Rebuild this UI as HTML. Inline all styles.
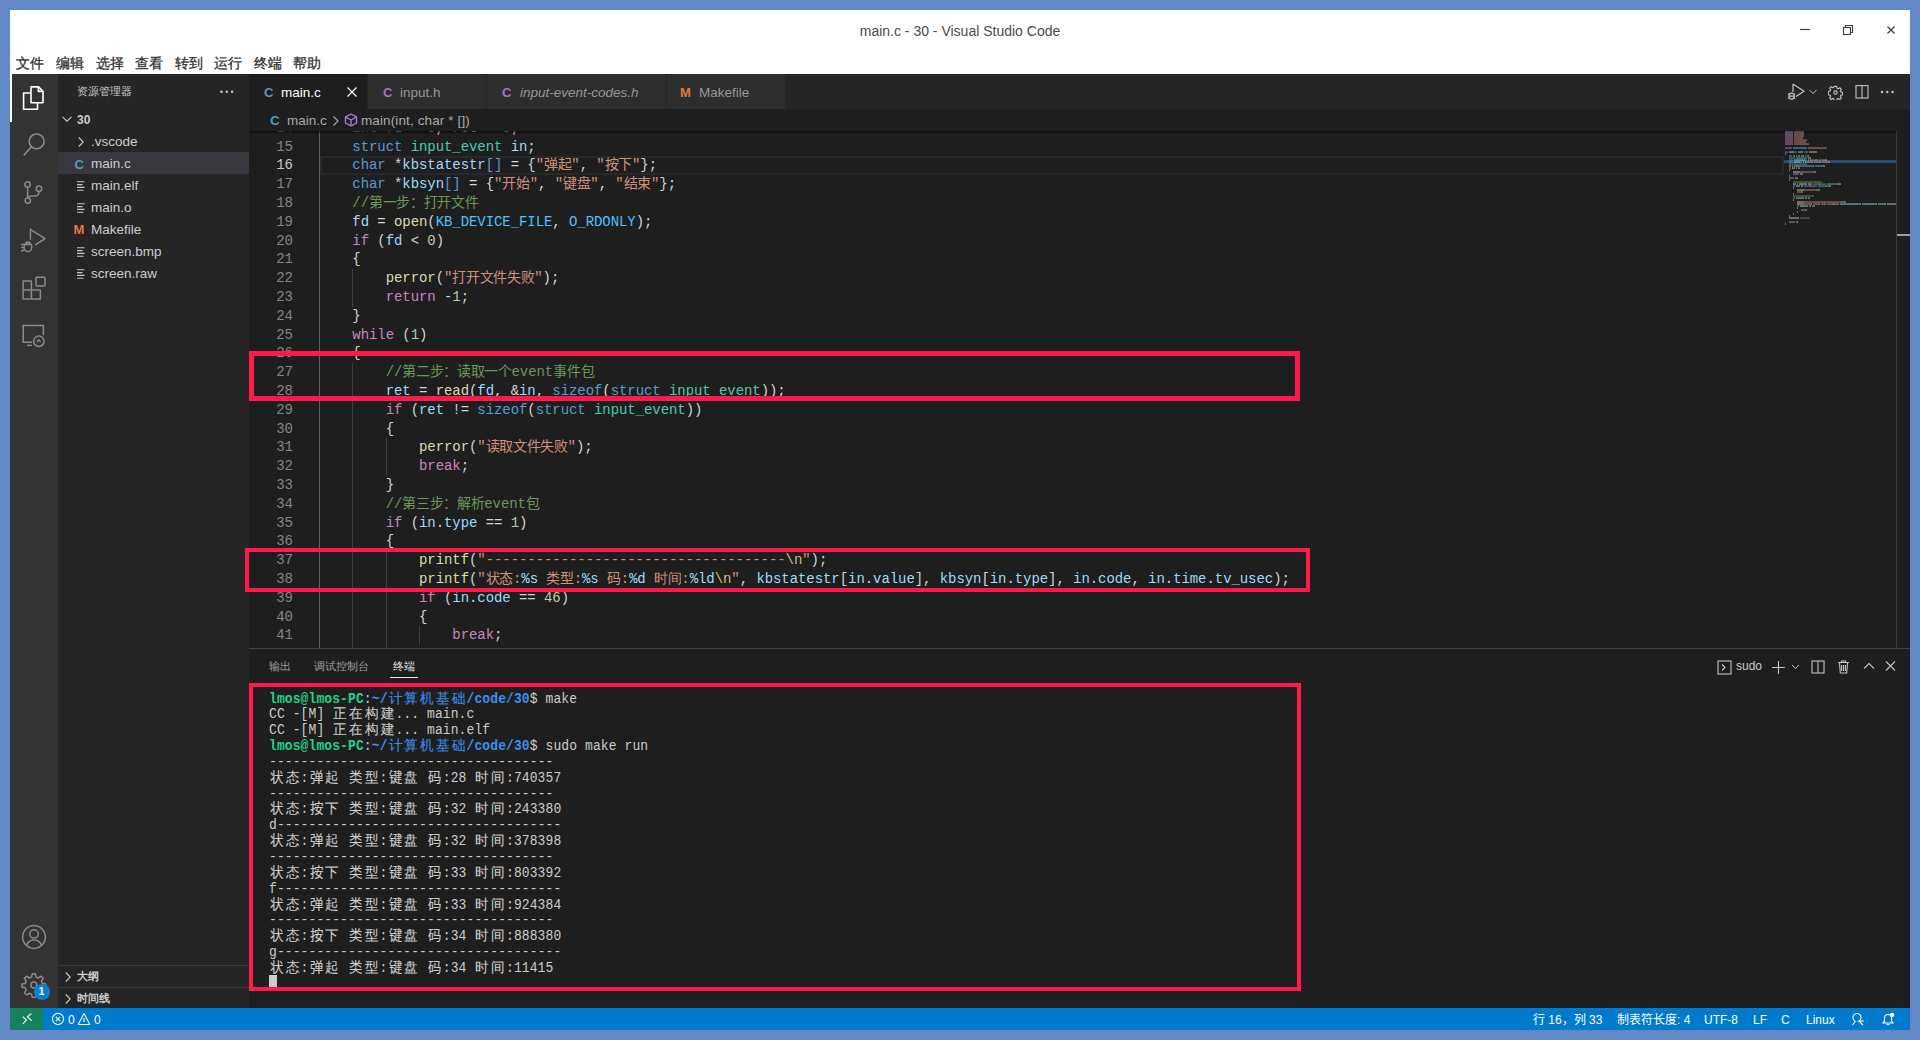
<!DOCTYPE html>
<html><head><meta charset="utf-8">
<style>
*{margin:0;padding:0;box-sizing:border-box}
html,body{width:1920px;height:1040px;overflow:hidden;background:#6388c6;font-family:"Liberation Sans",sans-serif}
.a{position:absolute}
b,i{font-weight:normal;font-style:normal}
#title{left:10px;top:10px;width:1900px;height:64px;background:#fff}
#ttext{left:0;top:13px;width:1900px;text-align:center;font-size:14px;color:#4a4a4a;letter-spacing:0}
.mi{top:44.5px;font-size:14px;color:#333333;-webkit-text-stroke:0.3px #333333}
#act{left:10px;top:74px;width:48px;height:934px;background:#333333}
#side{left:58px;top:74px;width:191px;height:934px;background:#252526}
#main{left:249px;top:74px;width:1661px;height:934px;background:#1e1e1e}
#tabs{left:0;top:0;width:1661px;height:35px;background:#252526}
.tab{top:0;height:35px;background:#2d2d2d;border-right:1px solid #252526;font-size:13.5px;color:#969696}
.tab.act{background:#1e1e1e;color:#ffffff}
.tab span{position:absolute;top:11px;white-space:nowrap}
#bc{left:0;top:35px;width:1661px;height:22px;background:#1e1e1e;font-size:13.5px;color:#a9a9a9}
#ed{left:0;top:57px;width:1661px;height:517px;overflow:hidden;background:#1e1e1e}
.cl{position:absolute;left:70px;height:18.8px;line-height:18.8px;font-family:"Liberation Mono",monospace;font-size:14px;color:#d4d4d4;white-space:pre;letter-spacing:-0.07px}
.cl i.cj{letter-spacing:-0.35px}
.ln{position:absolute;left:0;width:44px;text-align:right;height:18.8px;line-height:18.8px;font-family:"Liberation Mono",monospace;font-size:14px;color:#858585}
.ln.cur{color:#c6c6c6}
.ig{position:absolute;width:1px;background:#404040}
.ig.act{background:#606060}
b.k{color:#569cd6}b.c{color:#c586c0}b.t{color:#4ec9b0}b.v{color:#9cdcfe}b.f{color:#dcdcaa}
b.s{color:#ce9178}b.m{color:#6a9955}b.n{color:#b5cea8}b.o{color:#4fc1ff}b.e{color:#d7ba7d}
#curline{left:71px;top:25.4px;width:1464px;height:18.8px;border:2px solid #282828}
#panel{left:0;top:574px;width:1661px;height:360px;background:#1e1e1e;border-top:1px solid #414141}
.pt{top:9.5px;font-size:11px;color:#a0a0a0}
.tl{position:absolute;left:20px;height:15.84px;line-height:15.84px;font-family:"Liberation Mono",monospace;font-size:13px;color:#cccccc;white-space:pre;letter-spacing:0.1px}
.tl.sc{transform:scaleY(1.13);transform-origin:0 11.38px}
.tl i.tw{display:inline-block;width:15.8px;text-align:center;letter-spacing:0}
.tl.sc i.tw{transform:scale(1.03,0.94);transform-origin:50% 12px}
.tl i.tw{-webkit-text-stroke:0.1px currentColor}
.tl b.pg{color:#23d18b;font-weight:bold}
.tl b.pb{color:#3b8eea;font-weight:bold}
.cursor{display:inline-block;width:7.9px;height:14px;background:#cccccc;vertical-align:top;margin-top:-2px}
#status{left:10px;top:1008px;width:1900px;height:22px;background:#007acc;color:#fff;font-size:12px}
#remote{left:0;top:0;width:33px;height:22px;background:#16825d}
.st{top:4.5px;white-space:nowrap;line-height:14px}
.red{position:absolute;border:5px solid #ff1a4a}
.side-t{font-size:11px;color:#c8c8c8}
.fi{font-size:13.5px;color:#cccccc;white-space:nowrap}
</style></head><body>
<!-- title bar -->
<div id="title" class="a">
  <div id="ttext" class="a">main.c - 30 - Visual Studio Code</div>
  <svg class="a" style="left:1788px;top:14px" width="14" height="14" viewBox="0 0 14 14"><path d="M2 5.5h10" stroke="#3c3c3c" stroke-width="1.2"/></svg>
  <svg class="a" style="left:1831px;top:13px" width="14" height="14" viewBox="0 0 14 14" fill="none" stroke="#3c3c3c" stroke-width="1.1"><rect x="2.5" y="4.5" width="7" height="7"/><path d="M4.5 4.5V2.5h7v7h-2"/></svg>
  <svg class="a" style="left:1874px;top:13px" width="14" height="14" viewBox="0 0 14 14" fill="none" stroke="#3c3c3c" stroke-width="1.2"><path d="M3.5 3.5l7 7M10.5 3.5l-7 7"/></svg>
  <div class="a mi" style="left:6px">文件</div>
  <div class="a mi" style="left:45.5px">编辑</div>
  <div class="a mi" style="left:85.5px">选择</div>
  <div class="a mi" style="left:124.5px">查看</div>
  <div class="a mi" style="left:164.5px">转到</div>
  <div class="a mi" style="left:204px">运行</div>
  <div class="a mi" style="left:243.5px">终端</div>
  <div class="a mi" style="left:283px">帮助</div>
</div>

<!-- activity bar -->
<div id="act" class="a">
  <div class="a" style="left:0;top:0;width:2px;height:48px;background:#fff"></div>
  <!-- explorer -->
  <svg class="a" style="left:12px;top:11px" width="24" height="27" viewBox="0 0 24 27" fill="none" stroke="#ffffff" stroke-width="1.6" stroke-linejoin="round">
    <path d="M9 1.9h7.6l4.4 4.4V17.8H9z"/><path d="M16.4 1.9V6.4H21"/><path d="M9 8H1.6V24.3H15.5V17.8"/>
  </svg>
  <!-- search -->
  <svg class="a" style="left:12px;top:58px" width="24" height="26" viewBox="0 0 24 26" fill="none" stroke="#8a8a8a" stroke-width="1.6">
    <circle cx="14.6" cy="9.4" r="7.4"/><path d="M9.4 14.8L1.8 23.4"/>
  </svg>
  <!-- scm -->
  <svg class="a" style="left:12px;top:106px" width="24" height="26" viewBox="0 0 24 26" fill="none" stroke="#8a8a8a" stroke-width="1.5">
    <circle cx="5.5" cy="4.5" r="2.7"/><circle cx="5.8" cy="20.6" r="2.7"/><circle cx="17" cy="8.8" r="2.7"/>
    <path d="M5.6 7.2v10.7"/><path d="M17 11.5c0 3-2 4.6-4.6 4.6H10c-2.4 0-4.2 1.2-4.2 1.8"/>
  </svg>
  <!-- debug -->
  <svg class="a" style="left:11px;top:153px" width="26" height="28" viewBox="0 0 26 28" fill="none" stroke="#8a8a8a" stroke-width="1.5" stroke-linejoin="round" stroke-linecap="round">
    <path d="M9.4 2.3V12.3M9.4 2.3L24.1 11.6L14.7 17.5"/>
    <ellipse cx="6.9" cy="20.2" rx="3.8" ry="4.4"/><path d="M3.2 17.4h7.4M5 16a2 1.5 0 0 1 3.8 0"/><path d="M0.4 17.4h2.4M0.4 20.6h2.4M0.6 24l2.4-1"/>
  </svg>
  <!-- extensions -->
  <svg class="a" style="left:11px;top:202px" width="26" height="26" viewBox="0 0 26 26" fill="none" stroke="#8a8a8a" stroke-width="1.5" stroke-linejoin="round">
    <path d="M2.1 5.1H10.4V14.1H19.4V23H2.1Z"/><path d="M2.1 14.1H10.4V23"/><rect x="15" y="1.3" width="9" height="8.6" rx="0.8"/>
  </svg>
  <!-- remote explorer -->
  <svg class="a" style="left:12px;top:250px" width="24" height="24" viewBox="0 0 24 24" fill="none" stroke="#8a8a8a" stroke-width="1.5">
    <path d="M10 18.2H1.2V1.6h20.2v9.6"/><path d="M5 21.4h5"/><circle cx="16.8" cy="17.2" r="5.2"/><path d="M15 17.8l1.8-1.8 1.8 1.8"/>
  </svg>
  <!-- accounts -->
  <svg class="a" style="left:11px;top:850px" width="26" height="26" viewBox="0 0 26 26" fill="none" stroke="#8a8a8a" stroke-width="1.5">
    <circle cx="13" cy="13" r="11.4"/><circle cx="13" cy="10" r="4.2"/><path d="M5.4 21.2c1.6-3.4 4.4-5.2 7.6-5.2s6 1.8 7.6 5.2"/>
  </svg>
  <!-- settings gear -->
  <svg class="a" style="left:11px;top:898px" width="26" height="26" viewBox="0 0 26 26" fill="none" stroke="#8a8a8a" stroke-width="1.5" stroke-linejoin="round">
    <path d="M11.2 1.8h3.2l.6 3.2 2.2 1 2.8-1.8 2.2 2.2-1.8 2.8 1 2.2 3.2.6v3.2l-3.2.6-1 2.2 1.8 2.8-2.2 2.2-2.8-1.8-2.2 1-.6 3.2h-3.2l-.6-3.2-2.2-1-2.8 1.8-2.2-2.2 1.8-2.8-1-2.2-3.2-.6v-3.2l3.2-.6 1-2.2-1.8-2.8 2.2-2.2 2.8 1.8 2.2-1z"/>
    <circle cx="12.8" cy="13" r="3"/>
  </svg>
  <div class="a" style="left:23.5px;top:909.5px;width:16px;height:16px;border-radius:50%;background:#0b7fd3;color:#fff;font-size:10px;font-weight:bold;text-align:center;line-height:16px">1</div>
</div>

<!-- sidebar -->
<div id="side" class="a">
  <div class="a side-t" style="left:19px;top:10px">资源管理器</div>
  <div class="a" style="left:161px;top:16px;width:16px;height:3px">
    <svg width="16" height="4" viewBox="0 0 16 4" class="a" style="left:0;top:0"><circle cx="2.5" cy="1.8" r="1.3" fill="#c5c5c5"/><circle cx="7.8" cy="1.8" r="1.3" fill="#c5c5c5"/><circle cx="13.1" cy="1.8" r="1.3" fill="#c5c5c5"/></svg>
  </div>
  <!-- root 30 -->
  <svg class="a" style="left:3px;top:39px" width="12" height="12" viewBox="0 0 12 12" fill="none" stroke="#c5c5c5" stroke-width="1.1"><path d="M1.5 3.8L6 8.2l4.5-4.4"/></svg>
  <div class="a" style="left:19px;top:38.5px;font-size:12px;font-weight:bold;color:#cccccc">30</div>
  <svg class="a" style="left:17px;top:62px" width="12" height="12" viewBox="0 0 12 12" fill="none" stroke="#c5c5c5" stroke-width="1.1"><path d="M3.8 1.5L8.2 6l-4.4 4.5"/></svg>
  <div class="a fi" style="left:33px;top:60px">.vscode</div>
  <div class="a" style="left:0;top:78px;width:191px;height:22px;background:#37373d"></div>
  <div class="a" style="left:16.5px;top:82.5px;font-size:13px;font-weight:bold;color:#519aba">C</div>
  <div class="a fi" style="left:33px;top:82px">main.c</div>
  <svg class="a" style="left:18px;top:105.5px" width="12" height="12" viewBox="0 0 12 12" stroke="#c5c5c5" stroke-width="1.1"><path d="M1 1.8h7.5M1 4.6h5.5M1 7.4h7.5M1 10.2h6.5"/></svg>
  <div class="a fi" style="left:33px;top:104px">main.elf</div>
  <svg class="a" style="left:18px;top:127.5px" width="12" height="12" viewBox="0 0 12 12" stroke="#c5c5c5" stroke-width="1.1"><path d="M1 1.8h7.5M1 4.6h5.5M1 7.4h7.5M1 10.2h6.5"/></svg>
  <div class="a fi" style="left:33px;top:126px">main.o</div>
  <div class="a" style="left:15.5px;top:148px;font-size:13px;font-weight:bold;color:#e37933">M</div>
  <div class="a fi" style="left:33px;top:148px">Makefile</div>
  <svg class="a" style="left:18px;top:171.5px" width="12" height="12" viewBox="0 0 12 12" stroke="#c5c5c5" stroke-width="1.1"><path d="M1 1.8h7.5M1 4.6h5.5M1 7.4h7.5M1 10.2h6.5"/></svg>
  <div class="a fi" style="left:33px;top:170px">screen.bmp</div>
  <svg class="a" style="left:18px;top:193.5px" width="12" height="12" viewBox="0 0 12 12" stroke="#c5c5c5" stroke-width="1.1"><path d="M1 1.8h7.5M1 4.6h5.5M1 7.4h7.5M1 10.2h6.5"/></svg>
  <div class="a fi" style="left:33px;top:192px">screen.raw</div>
  <!-- outline/timeline -->
  <div class="a" style="left:0;top:891px;width:191px;height:1px;background:#3c3c3c"></div>
  <svg class="a" style="left:4px;top:897px" width="12" height="12" viewBox="0 0 12 12" fill="none" stroke="#c5c5c5" stroke-width="1.1"><path d="M3.8 1.5L8.2 6l-4.4 4.5"/></svg>
  <div class="a" style="left:19px;top:895px;font-size:11px;font-weight:bold;color:#cccccc">大纲</div>
  <div class="a" style="left:0;top:913px;width:191px;height:1px;background:#3c3c3c"></div>
  <svg class="a" style="left:4px;top:919px" width="12" height="12" viewBox="0 0 12 12" fill="none" stroke="#c5c5c5" stroke-width="1.1"><path d="M3.8 1.5L8.2 6l-4.4 4.5"/></svg>
  <div class="a" style="left:19px;top:917px;font-size:11px;font-weight:bold;color:#cccccc">时间线</div>
</div>

<!-- main editor group -->
<div id="main" class="a">
  <div id="tabs" class="a">
    <div class="a tab act" style="left:0;width:119px">
      <span style="left:15px;top:10.5px;font-weight:bold;color:#519aba;font-size:13px">C</span>
      <span style="left:32px">main.c</span>
      <svg class="a" style="left:97px;top:13px" width="12" height="10" viewBox="0 0 12 10" fill="none" stroke="#fff" stroke-width="1.2"><path d="M1.5 0.5l9 9M10.5 0.5l-9 9"/></svg>
    </div>
    <div class="a tab" style="left:119px;width:119px">
      <span style="left:15px;top:10.5px;font-weight:bold;color:#a074c4;font-size:13px">C</span>
      <span style="left:32px">input.h</span>
    </div>
    <div class="a tab" style="left:238px;width:180px">
      <span style="left:15px;top:10.5px;font-weight:bold;color:#a074c4;font-size:13px">C</span>
      <span style="left:33px;font-style:italic">input-event-codes.h</span>
    </div>
    <div class="a tab" style="left:418px;width:119px">
      <span style="left:13px;top:10.5px;font-weight:bold;color:#e37933;font-size:13px">M</span>
      <span style="left:32px">Makefile</span>
    </div>
    <!-- actions -->
    <svg class="a" style="left:1538px;top:9px" width="20" height="18" viewBox="0 0 20 18" fill="none" stroke="#c5c5c5" stroke-width="1.2" stroke-linejoin="round">
      <path d="M6 1v8M6 1l11 7.2-8 5.2"/><ellipse cx="4.6" cy="13.2" rx="2.6" ry="3"/><path d="M2 13.2h5.2M1 10.8l1.4.8M8.2 10.8l-1.4.8M1 15.6l1.4-.8M8.2 15.6l-1.4-.8"/>
    </svg>
    <svg class="a" style="left:1559px;top:14px" width="10" height="8" viewBox="0 0 10 8" fill="none" stroke="#c5c5c5" stroke-width="1"><path d="M1.5 2l3.5 3.5L8.5 2"/></svg>
    <svg class="a" style="left:1579px;top:11px" width="15" height="15" viewBox="0 0 16 16" fill="none" stroke="#c5c5c5" stroke-width="1.2" stroke-linejoin="round">
      <path d="M6.8 1.5h2.4l.4 1.9 1.3.6 1.7-1.1 1.7 1.7-1.1 1.7.6 1.3 1.9.4v2.4l-1.9.4-.6 1.3 1.1 1.7-1.7 1.7-1.7-1.1-1.3.6-.4 1.9H6.8l-.4-1.9-1.3-.6-1.7 1.1-1.7-1.7 1.1-1.7-.6-1.3-1.9-.4V6.8l1.9-.4.6-1.3-1.1-1.7 1.7-1.7 1.7 1.1 1.3-.6z"/><circle cx="8" cy="8" r="1.8"/>
    </svg>
    <svg class="a" style="left:1606px;top:11px" width="15" height="15" viewBox="0 0 15 15" fill="none" stroke="#c5c5c5" stroke-width="1.1"><rect x="1" y="0.6" width="12" height="12.4"/><path d="M7 0.6v12.4"/></svg>
    <svg class="a" style="left:1631px;top:16px" width="15" height="4" viewBox="0 0 15 4"><circle cx="2" cy="2" r="1.2" fill="#c5c5c5"/><circle cx="7.3" cy="2" r="1.2" fill="#c5c5c5"/><circle cx="12.6" cy="2" r="1.2" fill="#c5c5c5"/></svg>
  </div>
  <div id="bc" class="a">
    <span class="a" style="left:21px;top:3.5px;font-weight:bold;color:#519aba;font-size:13.5px">C</span>
    <span class="a" style="left:38px;top:3.5px">main.c</span>
    <svg class="a" style="left:82px;top:6px" width="10" height="12" viewBox="0 0 10 12" fill="none" stroke="#a9a9a9" stroke-width="1.1"><path d="M2.5 1.5L7 6l-4.5 4.5"/></svg>
    <svg class="a" style="left:95px;top:4px" width="14" height="14" viewBox="0 0 14 14" fill="none" stroke="#b180d7" stroke-width="1.3" stroke-linejoin="round"><path d="M7 1l5.5 3v6L7 13 1.5 10V4z"/><path d="M1.5 4L7 7l5.5-3M7 7v6"/></svg>
    <span class="a" style="left:112px;top:3.5px;white-space:nowrap;letter-spacing:0.12px">main(int, char * [])</span>
  </div>
  <div id="ed" class="a" lang="zh-CN">
    <div id="curline" class="a"></div>
<div class="ig act" style="left:70.00px;top:-12.20px;height:545.20px"></div>
<div class="ig" style="left:103.48px;top:138.20px;height:37.60px"></div>
<div class="ig" style="left:103.48px;top:232.20px;height:300.80px"></div>
<div class="ig" style="left:136.96px;top:307.40px;height:37.60px"></div>
<div class="ig" style="left:136.96px;top:420.20px;height:112.80px"></div>
<div class="ig" style="left:170.44px;top:495.40px;height:18.80px"></div>
<div class="ln" style="top:-12.20px">14</div>
<div class="ln" style="top:6.60px">15</div>
<div class="ln cur" style="top:25.40px">16</div>
<div class="ln" style="top:44.20px">17</div>
<div class="ln" style="top:63.00px">18</div>
<div class="ln" style="top:81.80px">19</div>
<div class="ln" style="top:100.60px">20</div>
<div class="ln" style="top:119.40px">21</div>
<div class="ln" style="top:138.20px">22</div>
<div class="ln" style="top:157.00px">23</div>
<div class="ln" style="top:175.80px">24</div>
<div class="ln" style="top:194.60px">25</div>
<div class="ln" style="top:213.40px">26</div>
<div class="ln" style="top:232.20px">27</div>
<div class="ln" style="top:251.00px">28</div>
<div class="ln" style="top:269.80px">29</div>
<div class="ln" style="top:288.60px">30</div>
<div class="ln" style="top:307.40px">31</div>
<div class="ln" style="top:326.20px">32</div>
<div class="ln" style="top:345.00px">33</div>
<div class="ln" style="top:363.80px">34</div>
<div class="ln" style="top:382.60px">35</div>
<div class="ln" style="top:401.40px">36</div>
<div class="ln" style="top:420.20px">37</div>
<div class="ln" style="top:439.00px">38</div>
<div class="ln" style="top:457.80px">39</div>
<div class="ln" style="top:476.60px">40</div>
<div class="ln" style="top:495.40px">41</div>
<div class="cl" style="top:-12.20px">    <b class="k">int</b> <b class="v">fd</b> = <b class="n">0</b>, <b class="v">ret</b> = <b class="n">0</b>;</div>
<div class="cl" style="top:6.60px">    <b class="k">struct</b> <b class="t">input_event</b> <b class="v">in</b>;</div>
<div class="cl" style="top:25.40px">    <b class="k">char</b> *<b class="v">kbstatestr</b><b class="k">[]</b> = {<b class="s">&quot;<i class="cj">弹起</i>&quot;</b>, <b class="s">&quot;<i class="cj">按下</i>&quot;</b>};</div>
<div class="cl" style="top:44.20px">    <b class="k">char</b> *<b class="v">kbsyn</b><b class="k">[]</b> = {<b class="s">&quot;<i class="cj">开始</i>&quot;</b>, <b class="s">&quot;<i class="cj">键盘</i>&quot;</b>, <b class="s">&quot;<i class="cj">结束</i>&quot;</b>};</div>
<div class="cl" style="top:63.00px">    <b class="m">//<i class="cj">第一步：打开文件</i></b></div>
<div class="cl" style="top:81.80px">    <b class="v">fd</b> = <b class="f">open</b>(<b class="o">KB_DEVICE_FILE</b>, <b class="o">O_RDONLY</b>);</div>
<div class="cl" style="top:100.60px">    <b class="c">if</b> (<b class="v">fd</b> &lt; <b class="n">0</b>)</div>
<div class="cl" style="top:119.40px">    {</div>
<div class="cl" style="top:138.20px">        <b class="f">perror</b>(<b class="s">&quot;<i class="cj">打开文件失败</i>&quot;</b>);</div>
<div class="cl" style="top:157.00px">        <b class="c">return</b> -<b class="n">1</b>;</div>
<div class="cl" style="top:175.80px">    }</div>
<div class="cl" style="top:194.60px">    <b class="c">while</b> (<b class="n">1</b>)</div>
<div class="cl" style="top:213.40px">    {</div>
<div class="cl" style="top:232.20px">        <b class="m">//<i class="cj">第二步：读取一个</i>event<i class="cj">事件包</i></b></div>
<div class="cl" style="top:251.00px">        <b class="v">ret</b> = <b class="f">read</b>(<b class="v">fd</b>, &amp;<b class="v">in</b>, <b class="k">sizeof</b>(<b class="k">struct</b> <b class="t">input_event</b>));</div>
<div class="cl" style="top:269.80px">        <b class="c">if</b> (<b class="v">ret</b> != <b class="k">sizeof</b>(<b class="k">struct</b> <b class="t">input_event</b>))</div>
<div class="cl" style="top:288.60px">        {</div>
<div class="cl" style="top:307.40px">            <b class="f">perror</b>(<b class="s">&quot;<i class="cj">读取文件失败</i>&quot;</b>);</div>
<div class="cl" style="top:326.20px">            <b class="c">break</b>;</div>
<div class="cl" style="top:345.00px">        }</div>
<div class="cl" style="top:363.80px">        <b class="m">//<i class="cj">第三步：解析</i>event<i class="cj">包</i></b></div>
<div class="cl" style="top:382.60px">        <b class="c">if</b> (<b class="v">in</b>.<b class="v">type</b> == <b class="n">1</b>)</div>
<div class="cl" style="top:401.40px">        {</div>
<div class="cl" style="top:420.20px">            <b class="f">printf</b>(<b class="s">&quot;------------------------------------</b><b class="e">\n</b><b class="s">&quot;</b>);</div>
<div class="cl" style="top:439.00px">            <b class="f">printf</b>(<b class="s">&quot;<i class="cj">状态</i>:</b><b class="v">%s</b><b class="s"> <i class="cj">类型</i>:</b><b class="v">%s</b><b class="s"> <i class="cj">码</i>:</b><b class="v">%d</b><b class="s"> <i class="cj">时间</i>:</b><b class="v">%ld</b><b class="e">\n</b><b class="s">&quot;</b>, <b class="v">kbstatestr</b>[<b class="v">in</b>.<b class="v">value</b>], <b class="v">kbsyn</b>[<b class="v">in</b>.<b class="v">type</b>], <b class="v">in</b>.<b class="v">code</b>, <b class="v">in</b>.<b class="v">time</b>.<b class="v">tv_usec</b>);</div>
<div class="cl" style="top:457.80px">            <b class="c">if</b> (<b class="v">in</b>.<b class="v">code</b> == <b class="n">46</b>)</div>
<div class="cl" style="top:476.60px">            {</div>
<div class="cl" style="top:495.40px">                <b class="c">break</b>;</div>
    <div class="a" style="left:0;top:0;width:1647px;height:3px;background:linear-gradient(#000000aa,#00000000)"></div>
    <!-- minimap -->
    <div class="a" style="left:1535px;top:28.5px;width:112px;height:3px;background:#264f78"></div>
    <div class="a" style="left:0;top:0;opacity:0.5"><svg class="a" style="left:1535.5px;top:-2px" width="112" height="100" viewBox="0 0 112 100"><rect x="0" y="0.2" width="8" height="1.7" fill="#c586c0"/><rect x="9" y="0.2" width="9" height="1.7" fill="#ce9178"/><rect x="0" y="2.2" width="8" height="1.7" fill="#c586c0"/><rect x="9" y="2.2" width="10" height="1.7" fill="#ce9178"/><rect x="0" y="4.2" width="8" height="1.7" fill="#c586c0"/><rect x="9" y="4.2" width="10" height="1.7" fill="#ce9178"/><rect x="0" y="6.2" width="8" height="1.7" fill="#c586c0"/><rect x="9" y="6.2" width="10" height="1.7" fill="#ce9178"/><rect x="0" y="8.2" width="8" height="1.7" fill="#c586c0"/><rect x="9" y="8.2" width="9" height="1.7" fill="#ce9178"/><rect x="0" y="10.2" width="8" height="1.7" fill="#c586c0"/><rect x="9" y="10.2" width="13" height="1.7" fill="#ce9178"/><rect x="0" y="12.2" width="8" height="1.7" fill="#c586c0"/><rect x="9" y="12.2" width="12" height="1.7" fill="#ce9178"/><rect x="0" y="14.2" width="8" height="1.7" fill="#c586c0"/><rect x="9" y="14.2" width="15" height="1.7" fill="#ce9178"/><rect x="0" y="18.2" width="7" height="1.7" fill="#c586c0"/><rect x="8" y="18.2" width="14" height="1.7" fill="#4fc1ff"/><rect x="23" y="18.2" width="19" height="1.7" fill="#ce9178"/><rect x="0" y="22.2" width="3" height="1.7" fill="#569cd6"/><rect x="4" y="22.2" width="4" height="1.7" fill="#dcdcaa"/><rect x="8" y="22.2" width="1" height="1.7" fill="#d4d4d4"/><rect x="9" y="22.2" width="3" height="1.7" fill="#569cd6"/><rect x="13" y="22.2" width="4" height="1.7" fill="#9cdcfe"/><rect x="17" y="22.2" width="1" height="1.7" fill="#d4d4d4"/><rect x="19" y="22.2" width="4" height="1.7" fill="#569cd6"/><rect x="24" y="22.2" width="1" height="1.7" fill="#d4d4d4"/><rect x="25" y="22.2" width="4" height="1.7" fill="#9cdcfe"/><rect x="29" y="22.2" width="3" height="1.7" fill="#d4d4d4"/><rect x="0" y="24.2" width="1" height="1.7" fill="#d4d4d4"/><rect x="4" y="26.2" width="3" height="1.7" fill="#569cd6"/><rect x="8" y="26.2" width="2" height="1.7" fill="#9cdcfe"/><rect x="11" y="26.2" width="1" height="1.7" fill="#d4d4d4"/><rect x="13" y="26.2" width="1" height="1.7" fill="#b5cea8"/><rect x="14" y="26.2" width="1" height="1.7" fill="#d4d4d4"/><rect x="16" y="26.2" width="3" height="1.7" fill="#9cdcfe"/><rect x="20" y="26.2" width="1" height="1.7" fill="#d4d4d4"/><rect x="22" y="26.2" width="1" height="1.7" fill="#b5cea8"/><rect x="23" y="26.2" width="1" height="1.7" fill="#d4d4d4"/><rect x="4" y="28.2" width="6" height="1.7" fill="#569cd6"/><rect x="11" y="28.2" width="11" height="1.7" fill="#4ec9b0"/><rect x="23" y="28.2" width="2" height="1.7" fill="#9cdcfe"/><rect x="25" y="28.2" width="1" height="1.7" fill="#d4d4d4"/><rect x="4" y="30.2" width="4" height="1.7" fill="#569cd6"/><rect x="9" y="30.2" width="1" height="1.7" fill="#d4d4d4"/><rect x="10" y="30.2" width="10" height="1.7" fill="#9cdcfe"/><rect x="20" y="30.2" width="2" height="1.7" fill="#569cd6"/><rect x="23" y="30.2" width="1" height="1.7" fill="#d4d4d4"/><rect x="25" y="30.2" width="1" height="1.7" fill="#d4d4d4"/><rect x="26" y="30.2" width="6" height="1.7" fill="#ce9178"/><rect x="32" y="30.2" width="1" height="1.7" fill="#d4d4d4"/><rect x="34" y="30.2" width="6" height="1.7" fill="#ce9178"/><rect x="40" y="30.2" width="2" height="1.7" fill="#d4d4d4"/><rect x="4" y="32.2" width="4" height="1.7" fill="#569cd6"/><rect x="9" y="32.2" width="1" height="1.7" fill="#d4d4d4"/><rect x="10" y="32.2" width="5" height="1.7" fill="#9cdcfe"/><rect x="15" y="32.2" width="2" height="1.7" fill="#569cd6"/><rect x="18" y="32.2" width="1" height="1.7" fill="#d4d4d4"/><rect x="20" y="32.2" width="1" height="1.7" fill="#d4d4d4"/><rect x="21" y="32.2" width="6" height="1.7" fill="#ce9178"/><rect x="27" y="32.2" width="1" height="1.7" fill="#d4d4d4"/><rect x="29" y="32.2" width="6" height="1.7" fill="#ce9178"/><rect x="35" y="32.2" width="1" height="1.7" fill="#d4d4d4"/><rect x="37" y="32.2" width="6" height="1.7" fill="#ce9178"/><rect x="43" y="32.2" width="2" height="1.7" fill="#d4d4d4"/><rect x="4" y="34.2" width="18" height="1.7" fill="#6a9955"/><rect x="4" y="36.2" width="2" height="1.7" fill="#9cdcfe"/><rect x="7" y="36.2" width="1" height="1.7" fill="#d4d4d4"/><rect x="9" y="36.2" width="4" height="1.7" fill="#dcdcaa"/><rect x="13" y="36.2" width="1" height="1.7" fill="#d4d4d4"/><rect x="14" y="36.2" width="14" height="1.7" fill="#4fc1ff"/><rect x="28" y="36.2" width="1" height="1.7" fill="#d4d4d4"/><rect x="30" y="36.2" width="8" height="1.7" fill="#4fc1ff"/><rect x="38" y="36.2" width="2" height="1.7" fill="#d4d4d4"/><rect x="4" y="38.2" width="2" height="1.7" fill="#c586c0"/><rect x="7" y="38.2" width="1" height="1.7" fill="#d4d4d4"/><rect x="8" y="38.2" width="2" height="1.7" fill="#9cdcfe"/><rect x="11" y="38.2" width="1" height="1.7" fill="#d4d4d4"/><rect x="13" y="38.2" width="1" height="1.7" fill="#b5cea8"/><rect x="14" y="38.2" width="1" height="1.7" fill="#d4d4d4"/><rect x="4" y="40.2" width="1" height="1.7" fill="#d4d4d4"/><rect x="8" y="42.2" width="6" height="1.7" fill="#dcdcaa"/><rect x="14" y="42.2" width="1" height="1.7" fill="#d4d4d4"/><rect x="15" y="42.2" width="14" height="1.7" fill="#ce9178"/><rect x="29" y="42.2" width="2" height="1.7" fill="#d4d4d4"/><rect x="8" y="44.2" width="6" height="1.7" fill="#c586c0"/><rect x="15" y="44.2" width="1" height="1.7" fill="#d4d4d4"/><rect x="16" y="44.2" width="1" height="1.7" fill="#b5cea8"/><rect x="17" y="44.2" width="1" height="1.7" fill="#d4d4d4"/><rect x="4" y="46.2" width="1" height="1.7" fill="#d4d4d4"/><rect x="4" y="48.2" width="5" height="1.7" fill="#c586c0"/><rect x="10" y="48.2" width="1" height="1.7" fill="#d4d4d4"/><rect x="11" y="48.2" width="1" height="1.7" fill="#b5cea8"/><rect x="12" y="48.2" width="1" height="1.7" fill="#d4d4d4"/><rect x="4" y="50.2" width="1" height="1.7" fill="#d4d4d4"/><rect x="8" y="52.2" width="29" height="1.7" fill="#6a9955"/><rect x="8" y="54.2" width="3" height="1.7" fill="#9cdcfe"/><rect x="12" y="54.2" width="1" height="1.7" fill="#d4d4d4"/><rect x="14" y="54.2" width="4" height="1.7" fill="#dcdcaa"/><rect x="18" y="54.2" width="1" height="1.7" fill="#d4d4d4"/><rect x="19" y="54.2" width="2" height="1.7" fill="#9cdcfe"/><rect x="21" y="54.2" width="1" height="1.7" fill="#d4d4d4"/><rect x="23" y="54.2" width="1" height="1.7" fill="#d4d4d4"/><rect x="24" y="54.2" width="2" height="1.7" fill="#9cdcfe"/><rect x="26" y="54.2" width="1" height="1.7" fill="#d4d4d4"/><rect x="28" y="54.2" width="6" height="1.7" fill="#569cd6"/><rect x="34" y="54.2" width="1" height="1.7" fill="#d4d4d4"/><rect x="35" y="54.2" width="6" height="1.7" fill="#569cd6"/><rect x="42" y="54.2" width="11" height="1.7" fill="#4ec9b0"/><rect x="53" y="54.2" width="3" height="1.7" fill="#d4d4d4"/><rect x="8" y="56.2" width="2" height="1.7" fill="#c586c0"/><rect x="11" y="56.2" width="1" height="1.7" fill="#d4d4d4"/><rect x="12" y="56.2" width="3" height="1.7" fill="#9cdcfe"/><rect x="16" y="56.2" width="2" height="1.7" fill="#d4d4d4"/><rect x="19" y="56.2" width="6" height="1.7" fill="#569cd6"/><rect x="25" y="56.2" width="1" height="1.7" fill="#d4d4d4"/><rect x="26" y="56.2" width="6" height="1.7" fill="#569cd6"/><rect x="33" y="56.2" width="11" height="1.7" fill="#4ec9b0"/><rect x="44" y="56.2" width="2" height="1.7" fill="#d4d4d4"/><rect x="8" y="58.2" width="1" height="1.7" fill="#d4d4d4"/><rect x="12" y="60.2" width="6" height="1.7" fill="#dcdcaa"/><rect x="18" y="60.2" width="1" height="1.7" fill="#d4d4d4"/><rect x="19" y="60.2" width="14" height="1.7" fill="#ce9178"/><rect x="33" y="60.2" width="2" height="1.7" fill="#d4d4d4"/><rect x="12" y="62.2" width="5" height="1.7" fill="#c586c0"/><rect x="17" y="62.2" width="1" height="1.7" fill="#d4d4d4"/><rect x="8" y="64.2" width="1" height="1.7" fill="#d4d4d4"/><rect x="8" y="66.2" width="21" height="1.7" fill="#6a9955"/><rect x="8" y="68.2" width="2" height="1.7" fill="#c586c0"/><rect x="11" y="68.2" width="1" height="1.7" fill="#d4d4d4"/><rect x="12" y="68.2" width="2" height="1.7" fill="#9cdcfe"/><rect x="14" y="68.2" width="1" height="1.7" fill="#d4d4d4"/><rect x="15" y="68.2" width="4" height="1.7" fill="#9cdcfe"/><rect x="20" y="68.2" width="2" height="1.7" fill="#d4d4d4"/><rect x="23" y="68.2" width="1" height="1.7" fill="#b5cea8"/><rect x="24" y="68.2" width="1" height="1.7" fill="#d4d4d4"/><rect x="8" y="70.2" width="1" height="1.7" fill="#d4d4d4"/><rect x="12" y="72.2" width="6" height="1.7" fill="#dcdcaa"/><rect x="18" y="72.2" width="1" height="1.7" fill="#d4d4d4"/><rect x="19" y="72.2" width="37" height="1.7" fill="#ce9178"/><rect x="56" y="72.2" width="2" height="1.7" fill="#d7ba7d"/><rect x="58" y="72.2" width="1" height="1.7" fill="#ce9178"/><rect x="59" y="72.2" width="2" height="1.7" fill="#d4d4d4"/><rect x="12" y="74.2" width="6" height="1.7" fill="#dcdcaa"/><rect x="18" y="74.2" width="1" height="1.7" fill="#d4d4d4"/><rect x="19" y="74.2" width="6" height="1.7" fill="#ce9178"/><rect x="25" y="74.2" width="2" height="1.7" fill="#9cdcfe"/><rect x="28" y="74.2" width="5" height="1.7" fill="#ce9178"/><rect x="33" y="74.2" width="2" height="1.7" fill="#9cdcfe"/><rect x="36" y="74.2" width="3" height="1.7" fill="#ce9178"/><rect x="39" y="74.2" width="2" height="1.7" fill="#9cdcfe"/><rect x="42" y="74.2" width="5" height="1.7" fill="#ce9178"/><rect x="47" y="74.2" width="3" height="1.7" fill="#9cdcfe"/><rect x="50" y="74.2" width="2" height="1.7" fill="#d7ba7d"/><rect x="52" y="74.2" width="1" height="1.7" fill="#ce9178"/><rect x="53" y="74.2" width="1" height="1.7" fill="#d4d4d4"/><rect x="55" y="74.2" width="10" height="1.7" fill="#9cdcfe"/><rect x="65" y="74.2" width="1" height="1.7" fill="#d4d4d4"/><rect x="66" y="74.2" width="2" height="1.7" fill="#9cdcfe"/><rect x="68" y="74.2" width="1" height="1.7" fill="#d4d4d4"/><rect x="69" y="74.2" width="5" height="1.7" fill="#9cdcfe"/><rect x="74" y="74.2" width="2" height="1.7" fill="#d4d4d4"/><rect x="77" y="74.2" width="5" height="1.7" fill="#9cdcfe"/><rect x="82" y="74.2" width="1" height="1.7" fill="#d4d4d4"/><rect x="83" y="74.2" width="2" height="1.7" fill="#9cdcfe"/><rect x="85" y="74.2" width="1" height="1.7" fill="#d4d4d4"/><rect x="86" y="74.2" width="4" height="1.7" fill="#9cdcfe"/><rect x="90" y="74.2" width="2" height="1.7" fill="#d4d4d4"/><rect x="93" y="74.2" width="2" height="1.7" fill="#9cdcfe"/><rect x="95" y="74.2" width="1" height="1.7" fill="#d4d4d4"/><rect x="96" y="74.2" width="4" height="1.7" fill="#9cdcfe"/><rect x="100" y="74.2" width="1" height="1.7" fill="#d4d4d4"/><rect x="102" y="74.2" width="2" height="1.7" fill="#9cdcfe"/><rect x="104" y="74.2" width="1" height="1.7" fill="#d4d4d4"/><rect x="105" y="74.2" width="4" height="1.7" fill="#9cdcfe"/><rect x="109" y="74.2" width="1" height="1.7" fill="#d4d4d4"/><rect x="110" y="74.2" width="2" height="1.7" fill="#9cdcfe"/><rect x="117" y="74.2" width="-5" height="1.7" fill="#d4d4d4"/><rect x="12" y="76.2" width="2" height="1.7" fill="#c586c0"/><rect x="15" y="76.2" width="1" height="1.7" fill="#d4d4d4"/><rect x="16" y="76.2" width="2" height="1.7" fill="#9cdcfe"/><rect x="18" y="76.2" width="1" height="1.7" fill="#d4d4d4"/><rect x="19" y="76.2" width="4" height="1.7" fill="#9cdcfe"/><rect x="24" y="76.2" width="2" height="1.7" fill="#d4d4d4"/><rect x="27" y="76.2" width="2" height="1.7" fill="#b5cea8"/><rect x="29" y="76.2" width="1" height="1.7" fill="#d4d4d4"/><rect x="12" y="78.2" width="1" height="1.7" fill="#d4d4d4"/><rect x="16" y="80.2" width="5" height="1.7" fill="#c586c0"/><rect x="21" y="80.2" width="1" height="1.7" fill="#d4d4d4"/><rect x="12" y="82.2" width="1" height="1.7" fill="#d4d4d4"/><rect x="8" y="84.2" width="1" height="1.7" fill="#d4d4d4"/><rect x="4" y="86.2" width="1" height="1.7" fill="#d4d4d4"/><rect x="4" y="88.2" width="5" height="1.7" fill="#dcdcaa"/><rect x="9" y="88.2" width="1" height="1.7" fill="#d4d4d4"/><rect x="10" y="88.2" width="2" height="1.7" fill="#9cdcfe"/><rect x="12" y="88.2" width="2" height="1.7" fill="#d4d4d4"/><rect x="15" y="88.2" width="10" height="1.7" fill="#6a9955"/><rect x="4" y="92.2" width="6" height="1.7" fill="#c586c0"/><rect x="11" y="92.2" width="1" height="1.7" fill="#b5cea8"/><rect x="12" y="92.2" width="1" height="1.7" fill="#d4d4d4"/><rect x="0" y="94.2" width="1" height="1.7" fill="#d4d4d4"/></svg></div>
    <!-- overview ruler -->
    <div class="a" style="left:1647px;top:0;width:1px;height:517px;background:#3a3a3a"></div>
    <div class="a" style="left:1648px;top:103px;width:13px;height:2px;background:#a0a0a0"></div>
  </div>
  <div id="panel" class="a">
    <div class="a pt" style="left:20px">输出</div>
    <div class="a pt" style="left:65px">调试控制台</div>
    <div class="a pt" style="left:143.5px;color:#e7e7e7">终端</div>
    <div class="a" style="left:141px;top:28px;width:28px;height:1px;background:#e7e7e7"></div>
    <!-- right actions -->
    <svg class="a" style="left:1468px;top:11px" width="15" height="15" viewBox="0 0 15 15" fill="none" stroke="#c5c5c5" stroke-width="1.1"><rect x="1" y="1" width="13" height="13"/><path d="M5 4.5l3 3-3 3"/></svg>
    <div class="a" style="left:1487px;top:10px;font-size:12px;color:#cccccc">sudo</div>
    <svg class="a" style="left:1522px;top:11px" width="15" height="15" viewBox="0 0 15 15" fill="none" stroke="#c5c5c5" stroke-width="1.1"><path d="M7.5 1v13M1 7.5h13"/></svg>
    <svg class="a" style="left:1542px;top:14px" width="9" height="8" viewBox="0 0 9 8" fill="none" stroke="#c5c5c5" stroke-width="1"><path d="M1 2l3.5 3.5L8 2"/></svg>
    <svg class="a" style="left:1562px;top:11px" width="14" height="14" viewBox="0 0 14 14" fill="none" stroke="#c5c5c5" stroke-width="1.1"><rect x="1" y="1" width="12" height="12"/><path d="M7 1v12"/></svg>
    <svg class="a" style="left:1588px;top:11px" width="13" height="14" viewBox="0 0 13 14" fill="none" stroke="#c5c5c5" stroke-width="1.1"><path d="M1 2.5h11M4.5 2.5V1h4v1.5M2.5 2.5l.8 10.5h6.4l.8-10.5M4.6 5v6M6.5 5v6M8.4 5v6"/></svg>
    <svg class="a" style="left:1614px;top:13px" width="12" height="8" viewBox="0 0 12 8" fill="none" stroke="#c5c5c5" stroke-width="1.1"><path d="M1 6.5L6 1.5l5 5"/></svg>
    <svg class="a" style="left:1636px;top:12px" width="11" height="10" viewBox="0 0 11 10" fill="none" stroke="#c5c5c5" stroke-width="1.1"><path d="M1 0.5l9 9M10 0.5l-9 9"/></svg>
<div class="tl sc" style="top:42.60px"><b class="pg">lmos@lmos-PC</b>:<b class="pb">~/<i class="tw">计</i><i class="tw">算</i><i class="tw">机</i><i class="tw">基</i><i class="tw">础</i>/code/30</b>$ make</div>
<div class="tl sc" style="top:58.44px">CC -[M] <i class="tw">正</i><i class="tw">在</i><i class="tw">构</i><i class="tw">建</i>... main.c</div>
<div class="tl sc" style="top:74.28px">CC -[M] <i class="tw">正</i><i class="tw">在</i><i class="tw">构</i><i class="tw">建</i>... main.elf</div>
<div class="tl sc" style="top:90.12px"><b class="pg">lmos@lmos-PC</b>:<b class="pb">~/<i class="tw">计</i><i class="tw">算</i><i class="tw">机</i><i class="tw">基</i><i class="tw">础</i>/code/30</b>$ sudo make run</div>
<div class="tl sc" style="top:105.96px">------------------------------------</div>
<div class="tl sc" style="top:121.80px"><i class="tw">状</i><i class="tw">态</i>:<i class="tw">弹</i><i class="tw">起</i> <i class="tw">类</i><i class="tw">型</i>:<i class="tw">键</i><i class="tw">盘</i> <i class="tw">码</i>:28 <i class="tw">时</i><i class="tw">间</i>:740357</div>
<div class="tl sc" style="top:137.64px">------------------------------------</div>
<div class="tl sc" style="top:153.48px"><i class="tw">状</i><i class="tw">态</i>:<i class="tw">按</i><i class="tw">下</i> <i class="tw">类</i><i class="tw">型</i>:<i class="tw">键</i><i class="tw">盘</i> <i class="tw">码</i>:32 <i class="tw">时</i><i class="tw">间</i>:243380</div>
<div class="tl sc" style="top:169.32px">d------------------------------------</div>
<div class="tl sc" style="top:185.16px"><i class="tw">状</i><i class="tw">态</i>:<i class="tw">弹</i><i class="tw">起</i> <i class="tw">类</i><i class="tw">型</i>:<i class="tw">键</i><i class="tw">盘</i> <i class="tw">码</i>:32 <i class="tw">时</i><i class="tw">间</i>:378398</div>
<div class="tl sc" style="top:201.00px">------------------------------------</div>
<div class="tl sc" style="top:216.84px"><i class="tw">状</i><i class="tw">态</i>:<i class="tw">按</i><i class="tw">下</i> <i class="tw">类</i><i class="tw">型</i>:<i class="tw">键</i><i class="tw">盘</i> <i class="tw">码</i>:33 <i class="tw">时</i><i class="tw">间</i>:803392</div>
<div class="tl sc" style="top:232.68px">f------------------------------------</div>
<div class="tl sc" style="top:248.52px"><i class="tw">状</i><i class="tw">态</i>:<i class="tw">弹</i><i class="tw">起</i> <i class="tw">类</i><i class="tw">型</i>:<i class="tw">键</i><i class="tw">盘</i> <i class="tw">码</i>:33 <i class="tw">时</i><i class="tw">间</i>:924384</div>
<div class="tl sc" style="top:264.36px">------------------------------------</div>
<div class="tl sc" style="top:280.20px"><i class="tw">状</i><i class="tw">态</i>:<i class="tw">按</i><i class="tw">下</i> <i class="tw">类</i><i class="tw">型</i>:<i class="tw">键</i><i class="tw">盘</i> <i class="tw">码</i>:34 <i class="tw">时</i><i class="tw">间</i>:888380</div>
<div class="tl sc" style="top:296.04px">g------------------------------------</div>
<div class="tl sc" style="top:311.88px"><i class="tw">状</i><i class="tw">态</i>:<i class="tw">弹</i><i class="tw">起</i> <i class="tw">类</i><i class="tw">型</i>:<i class="tw">键</i><i class="tw">盘</i> <i class="tw">码</i>:34 <i class="tw">时</i><i class="tw">间</i>:11415</div>
<div class="tl" style="top:327.72px"><span class="cursor"></span></div>
  </div>
</div>

<!-- status bar -->
<div id="status" class="a" lang="zh-CN">
  <div id="remote" class="a"></div>
  <svg class="a" style="left:12px;top:5px" width="11" height="12" viewBox="0 0 11 12" fill="none" stroke="#e8f4ee" stroke-width="1.2" stroke-linejoin="round"><path d="M0.6 3.6L4.5 7L0.8 10.8"/><path d="M9.4 0.6L5.4 3.8L9.6 7.8"/></svg>
  <svg class="a" style="left:41px;top:4px" width="14" height="14" viewBox="0 0 14 14" fill="none" stroke="#fff" stroke-width="1.1"><circle cx="7" cy="7" r="5.6"/><path d="M4.8 4.8l4.4 4.4M9.2 4.8l-4.4 4.4"/></svg>
  <div class="a st" style="left:58px">0</div>
  <svg class="a" style="left:67px;top:4px" width="14" height="14" viewBox="0 0 14 14" fill="none" stroke="#fff" stroke-width="1.1" stroke-linejoin="round"><path d="M7 1.5l5.8 11H1.2z"/><path d="M7 6v4"/></svg>
  <div class="a st" style="left:84px">0</div>
  <div class="a st" style="left:1523px">行 16，列 33</div>
  <div class="a st" style="left:1607px">制表符长度: 4</div>
  <div class="a st" style="left:1694px">UTF-8</div>
  <div class="a st" style="left:1743px">LF</div>
  <div class="a st" style="left:1771px">C</div>
  <div class="a st" style="left:1796px">Linux</div>
  <svg class="a" style="left:1841px;top:4px" width="14" height="14" viewBox="0 0 14 14" fill="none" stroke="#fff" stroke-width="1.1"><path d="M1.5 13l3-4M4 9a4 4 0 1 1 4 0h5"/><path d="M8 9l4 4"/></svg>
  <svg class="a" style="left:1871px;top:4px" width="14" height="14" viewBox="0 0 14 14" fill="none" stroke="#fff" stroke-width="1.1"><path d="M2 11h10l-1.5-2V6a3.5 3.5 0 0 0-7 0v3z"/><path d="M5.5 12.5h3"/><circle cx="11" cy="3" r="2.2" fill="#fff" stroke="none"/></svg>
</div>

<!-- red annotation boxes -->
<div class="red" style="left:248.5px;top:351px;width:1051px;height:50px"></div>
<div class="red" style="left:245px;top:548px;width:1065px;height:44px;border-width:4.6px"></div>
<div class="red" style="left:249px;top:682.5px;width:1052px;height:308px;border-width:4.6px"></div>
</body></html>
